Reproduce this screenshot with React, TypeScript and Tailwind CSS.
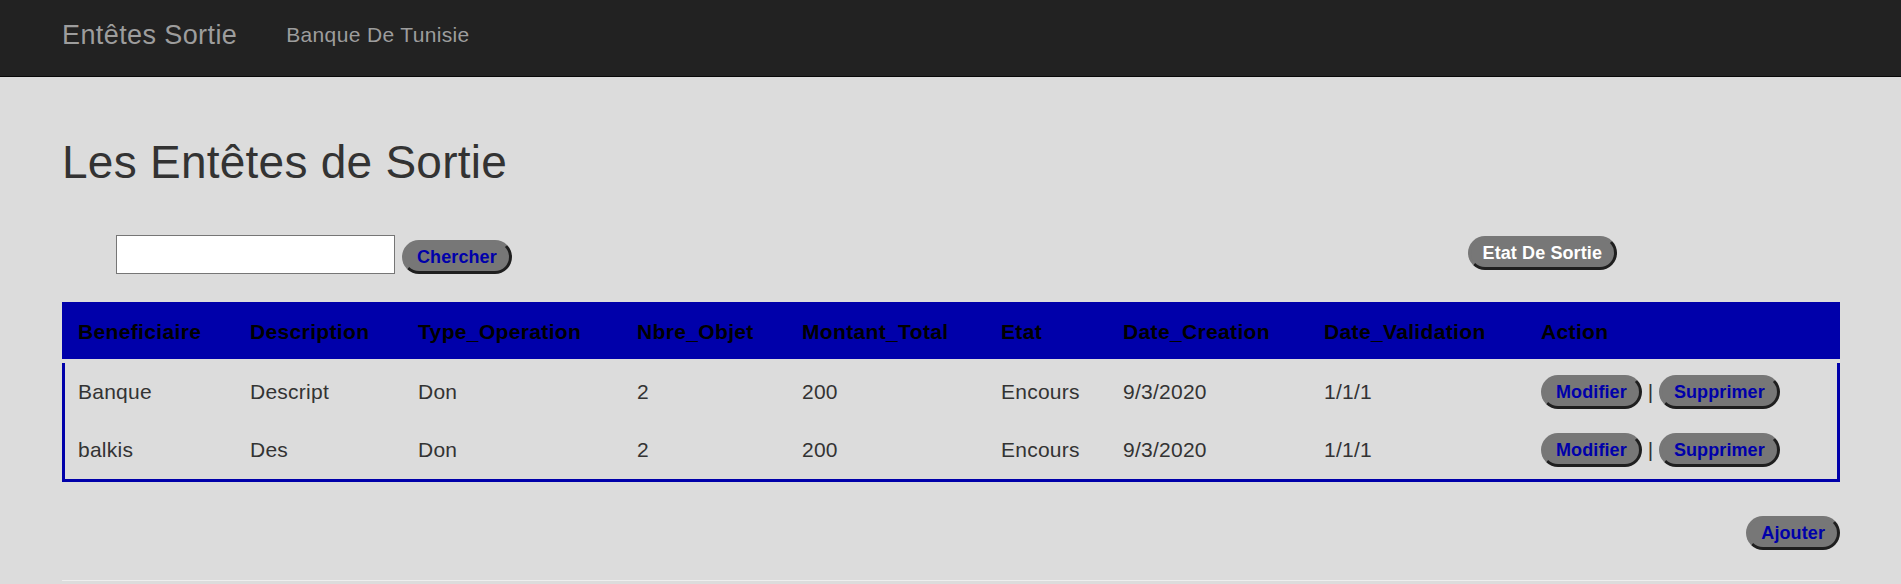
import React from 'react';

type Sortie = {
  beneficiaire: string;
  description: string;
  typeOperation: string;
  nbreObjet: number;
  montantTotal: number;
  etat: string;
  dateCreation: string;
  dateValidation: string;
};

const rows: Sortie[] = [
  {
    beneficiaire: 'Banque',
    description: 'Descript',
    typeOperation: 'Don',
    nbreObjet: 2,
    montantTotal: 200,
    etat: 'Encours',
    dateCreation: '9/3/2020',
    dateValidation: '1/1/1',
  },
  {
    beneficiaire: 'balkis',
    description: 'Des',
    typeOperation: 'Don',
    nbreObjet: 2,
    montantTotal: 200,
    etat: 'Encours',
    dateCreation: '9/3/2020',
    dateValidation: '1/1/1',
  },
];

const headers = [
  'Beneficiaire',
  'Description',
  'Type_Operation',
  'Nbre_Objet',
  'Montant_Total',
  'Etat',
  'Date_Creation',
  'Date_Validation',
  'Action',
];

const cols =
  'grid grid-cols-[172px_168px_219px_165px_199px_122px_201px_217px_1fr] items-center';

function PillButton({ label, white = false }: { label: string; white?: boolean }) {
  return (
    <button
      type="button"
      className={`inline-flex h-[34px] items-center rounded-full border-[3px] border-solid border-[#777] border-r-[#1f1f1f] border-b-[#1f1f1f] bg-[#777] px-[12px] text-[18px] font-bold leading-none tracking-[0.1px] ${
        white ? 'text-white' : 'text-[#0000aa]'
      }`}
    >
      {label}
    </button>
  );
}

export default function App() {
  return (
    <div className="min-h-screen bg-[#dcdcdc] font-['Liberation_Sans',Arial,sans-serif] text-[#333]">
      <nav className="h-[77px] border-b border-[#080808] bg-[#222]">
        <div className="flex px-[62px] pt-[20px] leading-[30px]">
          <span className="text-[27px] tracking-[0.4px] text-[#9d9d9d]">Entêtes Sortie</span>
          <span className="ml-[49px] text-[21px] tracking-[0.35px] text-[#9d9d9d]">
            Banque De Tunisie
          </span>
        </div>
      </nav>

      <main className="pl-[62px] pr-[61px]">
        <h2 className="mt-[60px] text-[46px] font-normal leading-[50px] tracking-[0.25px] text-[#333]">
          Les Entêtes de Sortie
        </h2>

        <div className="mt-[48px] flex items-start">
          <input
            type="text"
            className="ml-[54px] h-[39px] w-[279px] border border-[#767676] bg-white"
          />
          <div className="ml-[7px] mt-[5px]">
            <PillButton label="Chercher" />
          </div>
          <div className="ml-auto mr-[223px] mt-[1px]">
            <PillButton label="Etat De Sortie" white />
          </div>
        </div>

        <div className="mt-[28px] text-[21px] leading-[30px]">
          <div
            className={`${cols} h-[57px] bg-[#0000aa] pl-[16px] pt-[2px] font-bold tracking-[0.35px] text-black`}
          >
            {headers.map((h) => (
              <div key={h}>{h}</div>
            ))}
          </div>
          <div className="mt-[4px] border-x-[3px] border-b-[3px] border-[#0000aa] pl-[13px]">
            {rows.map((r, i) => (
              <div key={i} className={`${cols} h-[58px] tracking-[0.25px] text-[#333]`}>
                <div>{r.beneficiaire}</div>
                <div>{r.description}</div>
                <div>{r.typeOperation}</div>
                <div>{r.nbreObjet}</div>
                <div>{r.montantTotal}</div>
                <div>{r.etat}</div>
                <div>{r.dateCreation}</div>
                <div>{r.dateValidation}</div>
                <div className="flex items-center whitespace-pre tracking-normal">
                  <PillButton label="Modifier" />
                  <span> | </span>
                  <PillButton label="Supprimer" />
                </div>
              </div>
            ))}
          </div>
        </div>

        <div className="mt-[34px] flex justify-end">
          <PillButton label="Ajouter" />
        </div>

        <hr className="mt-[30px] border-t border-[#eee]" />
      </main>
    </div>
  );
}
